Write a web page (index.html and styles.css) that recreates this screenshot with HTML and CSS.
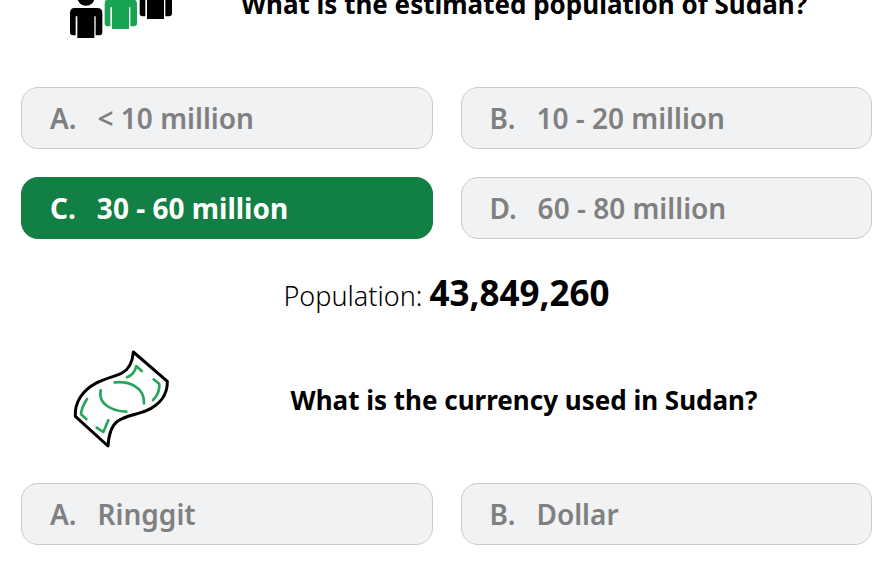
FILE: index.html
```
<!DOCTYPE html>
<html lang="en">
<head>
    <meta charset="UTF-8">
    <meta name="viewport" content="width=device-width, initial-scale=1">
    <title>Sudan quiz</title>
    <link rel="stylesheet" href="styles.css">
</head>
<body>
    <main class="quiz">
        <section class="question">
            <div class="question-head">
                <svg class="icon" viewBox="18 -141 330 300" aria-hidden="true">
                    <defs>
                        <g id="person">
                            <circle cx="78" cy="-9" r="26"/>
                            <path d="M44 24H112Q127 24 127 39V96Q127 106 118 106H107V49H103V114H52V49H47V106H39Q30 106 30 96V39Q30 24 44 24Z"/>
                        </g>
                    </defs>
                    <use href="#person"/>
                    <use href="#person" x="104" y="-27" fill="#18a452"/>
                    <use href="#person" x="209" y="-57"/>
                </svg>
                <h2 class="title">What is the estimated population of Sudan?</h2>
            </div>
            <div class="options">
                <button class="option" type="button"><span class="letter">A.</span>&lt; 10 million</button>
                <button class="option" type="button"><span class="letter">B.</span>10 - 20 million</button>
                <button class="option correct" type="button"><span class="letter">C.</span>30 - 60 million</button>
                <button class="option" type="button"><span class="letter">D.</span>60 - 80 million</button>
            </div>
            <p class="answer">Population: <strong>43,849,260</strong></p>
        </section>
        <section class="question">
            <div class="question-head">
                <svg class="icon" viewBox="3 27 330 300" aria-hidden="true">
                    <g fill="none" stroke-linecap="round" stroke-linejoin="round">
                        <path stroke="#000" stroke-width="9" d="M205 36L307 124C308 164 284 195 244 212C215 225 184 225 157 244C137 259 131 284 129 318L31 229C28 187 53 151 92 130C121 114 150 110 171 99C194 87 203 62 205 36Z"/>
                        <g stroke="#27a65b" stroke-width="8">
                            <path d="M149 127C194 122 239 143 237 190"/>
                            <path d="M107 151C98 193 142 213 184 215"/>
                            <path d="M186 112C204 105 211 93 214 78L230 93"/>
                            <path d="M266 118L283 132C284 151 277 168 264 180"/>
                            <path d="M66 177C55 194 49 207 48 223L64 237"/>
                            <path d="M130 241L115 276L95 263"/>
                        </g>
                    </g>
                </svg>
                <h2 class="title">What is the currency used in Sudan?</h2>
            </div>
            <div class="options">
                <button class="option" type="button"><span class="letter">A.</span>Ringgit</button>
                <button class="option" type="button"><span class="letter">B.</span>Dollar</button>
            </div>
        </section>
    </main>
</body>
</html>
```
FILE: styles.css
```
body, html {
    margin: 0;
    padding: 0;
}
body {
    background: #fff;
    color: #000;
    font-family: "Noto Sans", "Open Sans", sans-serif;
    overflow: hidden;
}
/* page is scrolled part way into the first question */
.quiz {
    margin-top: -47px;
    padding: 0 24px 0 21px;
}
.question-head {
    display: grid;
    grid-template-columns: 200px 1fr;
    align-items: center;
    padding-right: 45px;
    margin-bottom: 34px;
}
.icon {
    display: block;
    width: 110px;
    height: 100px;
    margin: 0 auto;
}
.title {
    margin: 0;
    padding-top: 2px;
    font-size: 26px;
    line-height: 36px;
    font-weight: 700;
    text-align: center;
}
.options {
    display: grid;
    grid-template-columns: 1fr 1fr;
    gap: 28px;
}
.option {
    height: 62px;
    padding: 0 28px;
    border: 1px solid #c9cbce;
    border-radius: 17px;
    background: #f1f2f4;
    color: #808080;
    font-family: inherit;
    font-size: 28px;
    line-height: 36px;
    font-weight: 600;
    text-align: left;
    cursor: pointer;
}
.option.correct {
    border-color: #128044;
    background: #128044;
    color: #fff;
    font-weight: 700;
}
.letter {
    margin-right: 21px;
}
.answer {
    margin: 0;
    padding: 30px 0 29px;
    font-size: 27px;
    line-height: 48px;
    font-weight: 300;
    text-align: center;
}
.answer strong {
    font-size: 35px;
    font-weight: 700;
}
```
